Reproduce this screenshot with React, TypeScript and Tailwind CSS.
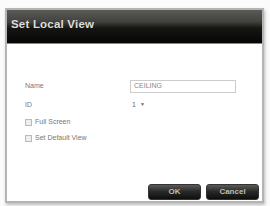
import React from "react";

export default function App() {
  const font = { fontFamily: '"Liberation Sans", Arial, sans-serif' };
  return (
    <div className="w-[270px] h-[206px] bg-[#fbfbfb] pt-[8px] pl-[5px]" style={font}>
      <div className="w-[259px] h-[195px] border-2 border-[#b4b4b4] bg-white flex flex-col shadow-[1px_2px_3px_rgba(0,0,0,0.25)]">
        <div className="h-[34px] shrink-0 bg-[linear-gradient(#5a5a56,#42423f_35%,#151513_55%,#060605)] flex items-center pl-[4px] border-b border-[#888]">
          <span className="text-[11.5px] font-bold text-[#dcdcdc] tracking-[0.2px] mt-[-3px]">Set Local View</span>
        </div>
        <div className="flex-1 flex flex-col pl-[18px] pr-[2px] pt-[36px] pb-[1px] text-[7px] text-[#777]">
          <div className="flex items-center h-[13px]">
            <span className="w-[105px]">Name</span>
            <div className="w-[106px] h-[13px] border border-[#ccc] flex items-center pl-[3px] text-[#888]">CEILING</div>
          </div>
          <div className="flex items-center h-[12px] mt-[6px]">
            <span className="w-[107px]">ID</span>
            <span className="text-[#666]">1</span>
            <span className="ml-[4px] text-[5px] text-[#666]">▼</span>
          </div>
          <div className="flex items-center mt-[6px] h-[10px]">
            <span className="w-[7px] h-[7px] border border-[#bbb] bg-[#eee] mr-[3px]" />
            <span>Full Screen</span>
          </div>
          <div className="flex items-center mt-[6px] h-[10px]">
            <span className="w-[7px] h-[7px] border border-[#bbb] bg-[#eee] mr-[3px]" />
            <span>Set Default View</span>
          </div>
          <div className="flex-1" />
          <div className="flex justify-end gap-[5px] pr-[1px]">
            <div className="w-[53px] h-[16px] rounded-[3px] bg-[linear-gradient(#5a5a58,#2a2a28_45%,#0e0e0c)] border border-[#333] flex items-center justify-center text-[8px] font-bold text-[#bdbdbd]">OK</div>
            <div className="w-[53px] h-[16px] rounded-[3px] bg-[linear-gradient(#5a5a58,#2a2a28_45%,#0e0e0c)] border border-[#333] flex items-center justify-center text-[8px] font-bold text-[#bdbdbd]">Cancel</div>
          </div>
        </div>
      </div>
    </div>
  );
}
